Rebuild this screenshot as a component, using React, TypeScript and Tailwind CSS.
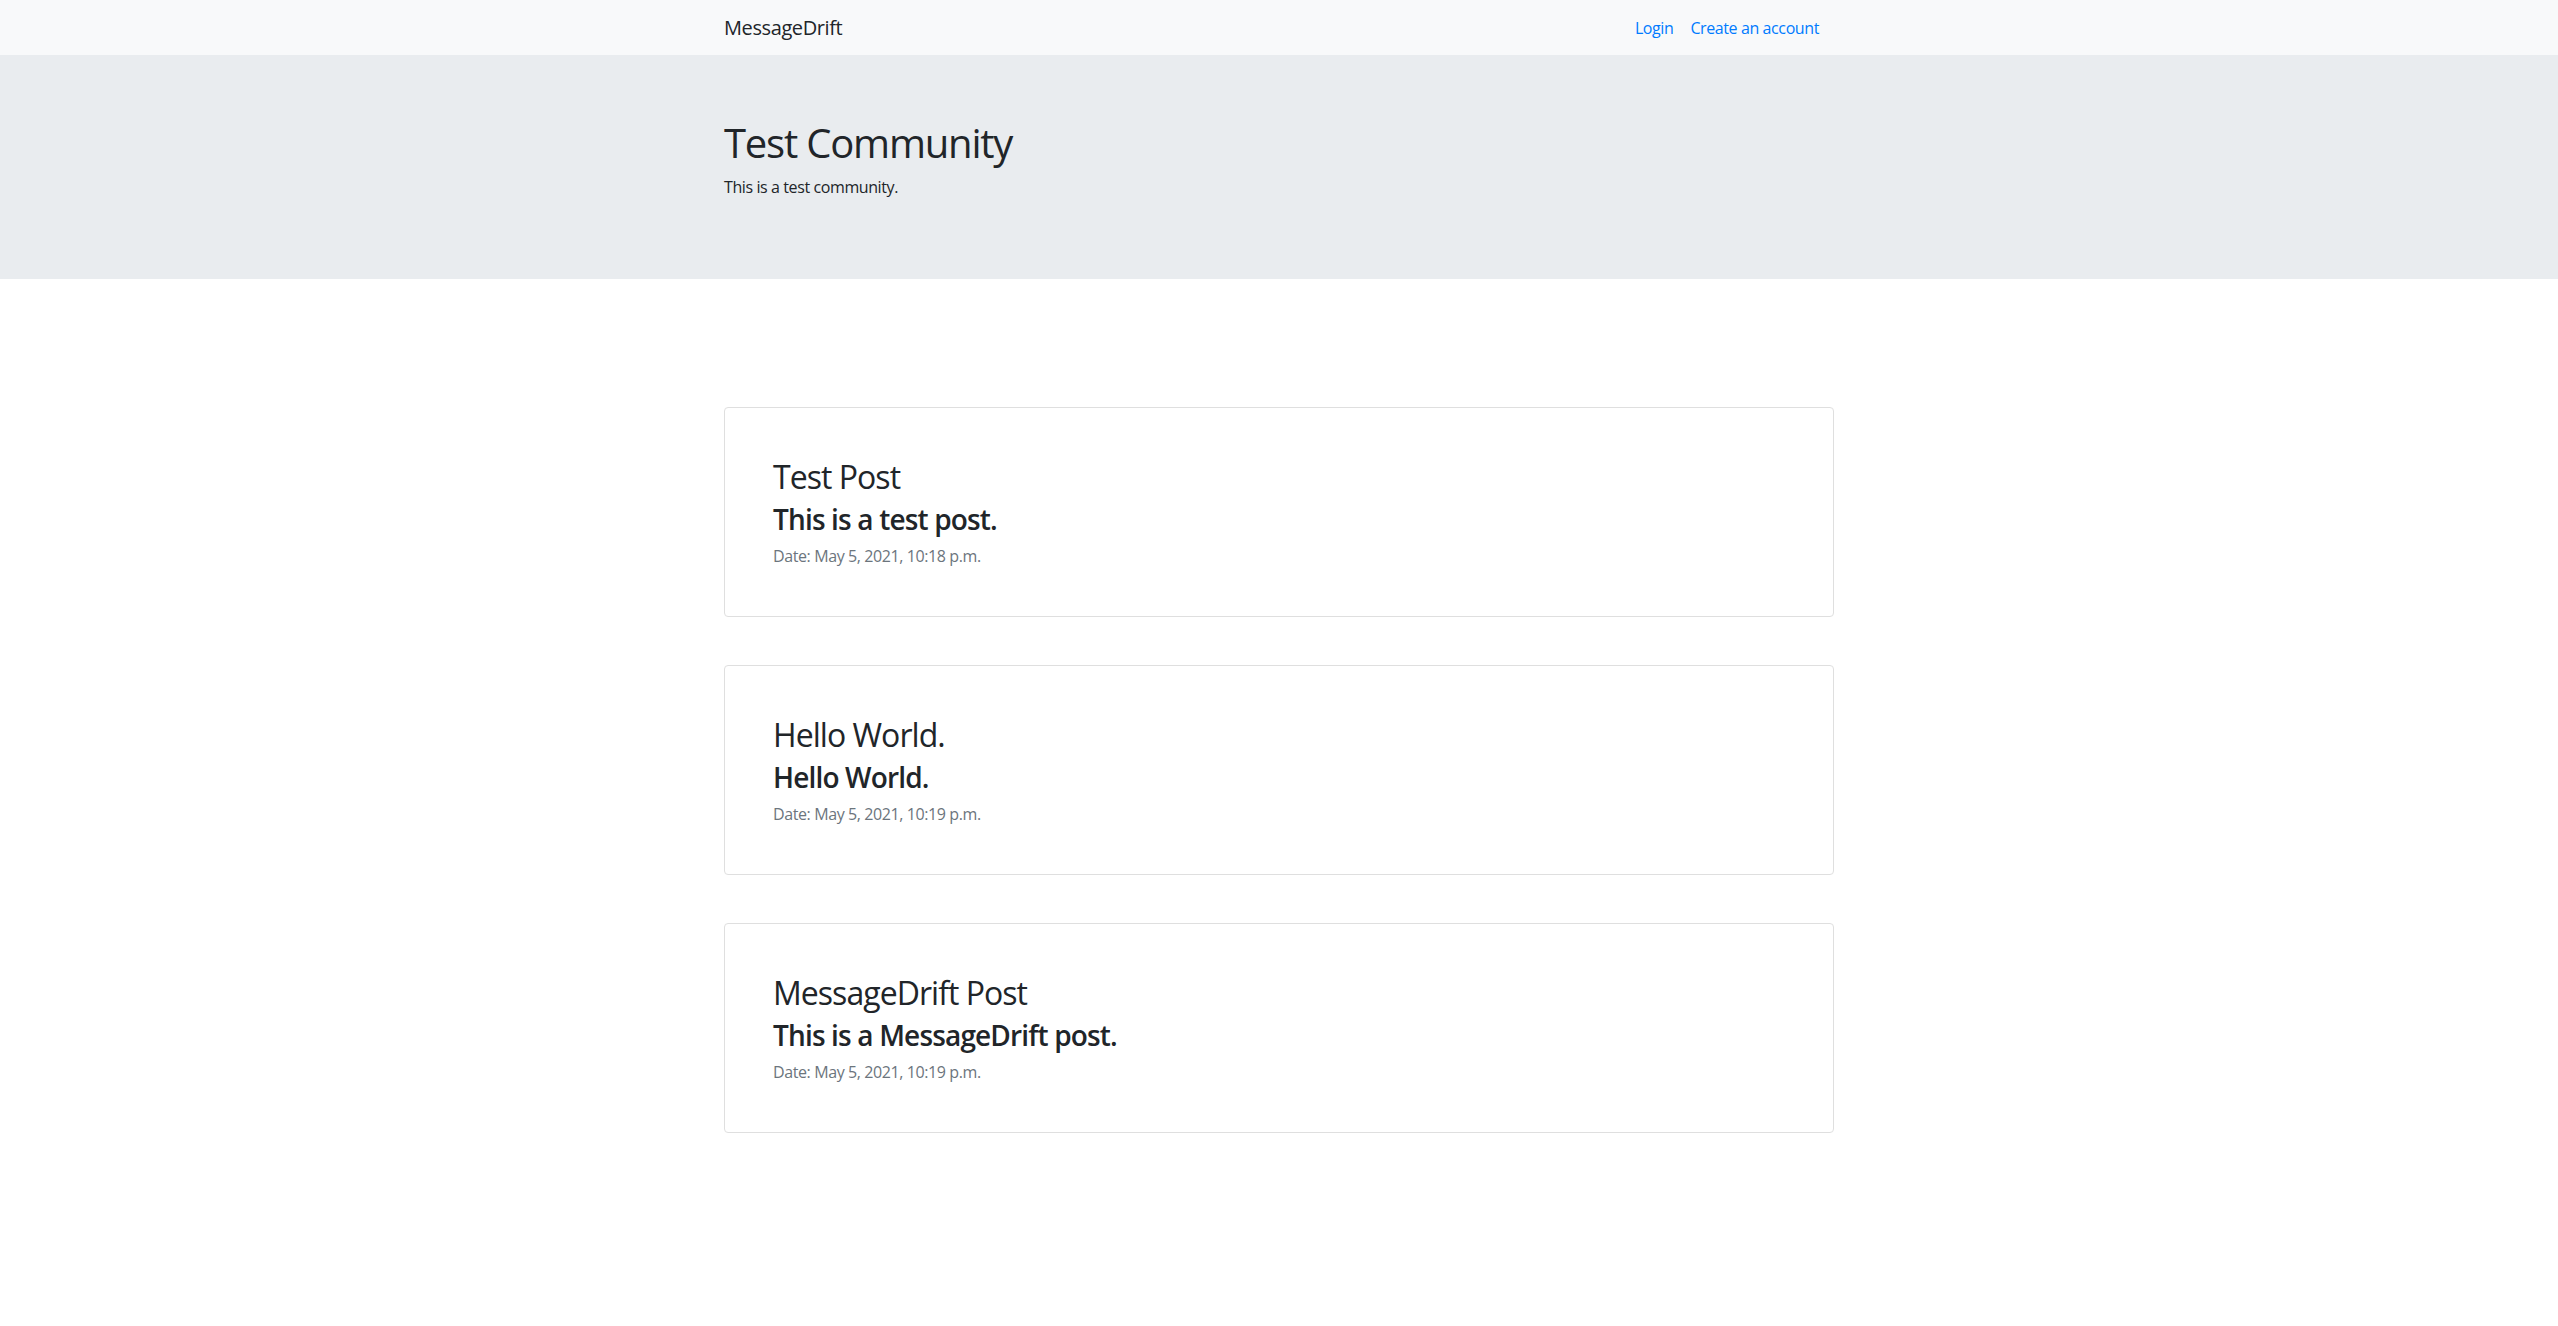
import React from "react"

const posts = [
  { title: "Test Post", body: "This is a test post.", date: "May 5, 2021, 10:18 p.m." },
  { title: "Hello World.", body: "Hello World.", date: "May 5, 2021, 10:19 p.m." },
  { title: "MessageDrift Post", body: "This is a MessageDrift post.", date: "May 5, 2021, 10:19 p.m." },
]

const App = () => {
  return (
    <div className="min-h-screen bg-white text-[#212529] tracking-[-0.025em] font-['Open_Sans','Noto_Sans',sans-serif]">
      {/* Navbar */}
      <nav className="h-[55px] bg-[#f8f9fa]">
        <div className="mx-auto flex h-full max-w-[1140px] items-center justify-between px-[15px]">
          <a href="#" className="text-[20px] leading-[30px] text-[#212529]">
            MessageDrift
          </a>
          <div className="flex items-center gap-[17px] pr-[15px]">
            <a href="#" className="text-[16px] leading-6 text-[#007bff]">
              Login
            </a>
            <a href="#" className="text-[16px] leading-6 text-[#007bff]">
              Create an account
            </a>
          </div>
        </div>
      </nav>

      {/* Jumbotron */}
      <header className="bg-[#e9ecef] py-16">
        <div className="mx-auto max-w-[1140px] px-[15px]">
          <h1 className="mb-2 text-[40px] font-medium leading-[48px] tracking-[-0.03em]">Test Community</h1>
          <p className="mb-4 text-[16px] leading-6">This is a test community.</p>
        </div>
      </header>

      {/* Posts */}
      <main className="mx-auto max-w-[1140px] px-[15px] pt-32">
        {posts.map((post, index) => (
          <div
            key={index}
            className="mb-12 rounded border border-[#dfdfdf] bg-white p-12"
          >
            <h2 className="mb-1 text-[32px] font-medium leading-[42px] tracking-[-0.03em]">{post.title}</h2>
            <h3 className="mb-2 text-[28px] font-semibold leading-[34px] tracking-[-0.03em]">
              {post.body}
            </h3>
            <p className="text-[16px] leading-6 text-[#6c757d]">Date: {post.date}</p>
          </div>
        ))}
      </main>
    </div>
  )
}

export default App
